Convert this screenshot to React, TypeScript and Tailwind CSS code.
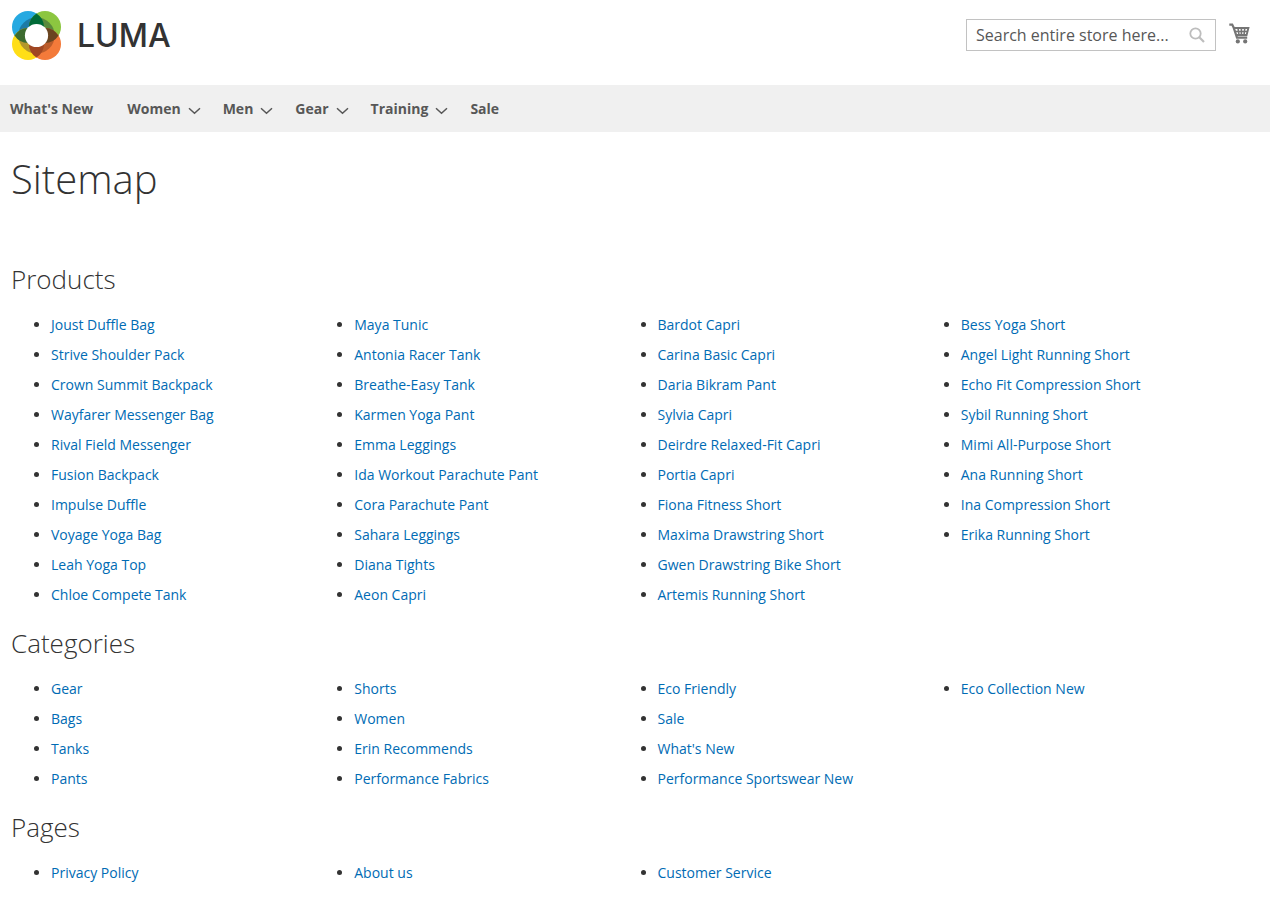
const menu = [
  { label: "What's New", hasChildren: false },
  { label: "Women", hasChildren: true },
  { label: "Men", hasChildren: true },
  { label: "Gear", hasChildren: true },
  { label: "Training", hasChildren: true },
  { label: "Sale", hasChildren: false },
];

const sections = [
  {
    title: "Products",
    links: [
      "Joust Duffle Bag",
      "Strive Shoulder Pack",
      "Crown Summit Backpack",
      "Wayfarer Messenger Bag",
      "Rival Field Messenger",
      "Fusion Backpack",
      "Impulse Duffle",
      "Voyage Yoga Bag",
      "Leah Yoga Top",
      "Chloe Compete Tank",
      "Maya Tunic",
      "Antonia Racer Tank",
      "Breathe-Easy Tank",
      "Karmen Yoga Pant",
      "Emma Leggings",
      "Ida Workout Parachute Pant",
      "Cora Parachute Pant",
      "Sahara Leggings",
      "Diana Tights",
      "Aeon Capri",
      "Bardot Capri",
      "Carina Basic Capri",
      "Daria Bikram Pant",
      "Sylvia Capri",
      "Deirdre Relaxed-Fit Capri",
      "Portia Capri",
      "Fiona Fitness Short",
      "Maxima Drawstring Short",
      "Gwen Drawstring Bike Short",
      "Artemis Running Short",
      "Bess Yoga Short",
      "Angel Light Running Short",
      "Echo Fit Compression Short",
      "Sybil Running Short",
      "Mimi All-Purpose Short",
      "Ana Running Short",
      "Ina Compression Short",
      "Erika Running Short",
    ],
  },
  {
    title: "Categories",
    links: [
      "Gear",
      "Bags",
      "Tanks",
      "Pants",
      "Shorts",
      "Women",
      "Erin Recommends",
      "Performance Fabrics",
      "Eco Friendly",
      "Sale",
      "What's New",
      "Performance Sportswear New",
      "Eco Collection New",
    ],
  },
  {
    title: "Pages",
    links: ["Privacy Policy", "About us", "Customer Service"],
  },
];

function Logo() {
  return (
    <a href="#" aria-label="Luma" className="flex items-center gap-4 pl-0.5">
      <svg viewBox="0 0 49 49" className="h-[49px] w-[49px]" aria-hidden="true">
        <defs>
          <clipPath id="ring">
            <circle cx="24.5" cy="24.5" r="18.2" />
          </clipPath>
        </defs>
        <circle cx="16" cy="16" r="16" fill="#26a9e1" />
        <circle cx="33" cy="16" r="16" fill="#8cc640" />
        <circle cx="16" cy="33" r="16" fill="#ffde17" />
        <circle cx="33" cy="33" r="16" fill="#f37a3a" />
        {/* darker tones where the centre ring crosses each circle */}
        <g clipPath="url(#ring)">
          <circle cx="16" cy="16" r="16" fill="#1d7ba6" />
          <circle cx="33" cy="16" r="16" fill="#5a8a3c" />
          <circle cx="16" cy="33" r="16" fill="#b3972c" />
          <circle cx="33" cy="33" r="16" fill="#bb5c2b" />
        </g>
        <path d="M2.45 24.5A16 16 0 0 1 29.55 24.5A16 16 0 0 1 2.45 24.5Z" fill="#3c6b30" />
        <path d="M19.45 24.5A16 16 0 0 1 46.55 24.5A16 16 0 0 1 19.45 24.5Z" fill="#6a4520" />
        <path d="M24.5 2.45A16 16 0 0 1 24.5 29.55A16 16 0 0 1 24.5 2.45Z" fill="#006b38" />
        <path d="M24.5 19.45A16 16 0 0 1 24.5 46.55A16 16 0 0 1 24.5 19.45Z" fill="#a04723" />
        <circle cx="24.5" cy="24.5" r="11.6" fill="#fff" />
      </svg>
      <span className="font-[Inter,sans-serif] text-[32px] leading-8 font-medium text-[#333]">LUMA</span>
    </a>
  );
}

function SearchIcon() {
  return (
    <svg viewBox="0 0 16 16" className="h-4 w-4" fill="none" stroke="#bdbdbd" aria-hidden="true">
      <circle cx="6.5" cy="6.5" r="5.2" strokeWidth="1.8" />
      <path d="M10.3 10.3 15 15" strokeWidth="2.2" />
    </svg>
  );
}

function CartIcon() {
  return (
    <svg viewBox="0 0 21 21" className="h-[21px] w-[21px]" fill="none" stroke="#757575" aria-hidden="true">
      <path d="M0.3 1.6H3.2L4.6 4.4L8 14.6H18.2" strokeWidth="2.2" />
      <path d="M4.6 5H19.4L17.6 12H7" strokeWidth="1.9" />
      <path d="M5.6 8.5H18.6M9 5 10 12M12.4 5V12M15.8 5 15 12" strokeWidth="1.6" />
      <circle cx="8.8" cy="18.4" r="2.1" fill="#757575" stroke="none" />
      <circle cx="16.2" cy="18.4" r="2.1" fill="#757575" stroke="none" />
    </svg>
  );
}

function Header() {
  return (
    <header className="flex h-[85px] items-start justify-between pr-5 pl-2.5">
      <div className="pt-[11px]">
        <Logo />
      </div>
      <div className="flex items-center gap-[13px] pt-[19px]">
        <form role="search" className="flex h-8 w-[250px] items-center border border-[#c2c2c2] bg-white pr-2.5 pl-[9px]">
          <input
            type="text"
            aria-label="Search"
            placeholder="Search entire store here..."
            className="min-w-0 flex-1 text-base leading-6 text-[#333] outline-none placeholder:text-[#575757]"
          />
          <button type="submit" aria-label="Search">
            <SearchIcon />
          </button>
        </form>
        <a href="#" aria-label="My Cart" className="pb-1">
          <CartIcon />
        </a>
      </div>
    </header>
  );
}

function Navigation() {
  return (
    <nav className="bg-[#f0f0f0] pr-5 pl-2.5">
      <ul className="flex gap-[22px]">
        {menu.map((item) => (
          <li key={item.label} className={item.hasChildren ? "" : "pr-3"}>
            <a href="#" className="flex h-[47px] items-center gap-[7px] text-sm font-bold text-[#575757]">
              {item.label}
              {item.hasChildren && (
                <svg viewBox="0 0 13 8" className="mt-1 h-2 w-[13px]" fill="none" stroke="#575757" aria-hidden="true">
                  <path d="M1 1.2 6.5 6.2 12 1.2" strokeWidth="1.5" />
                </svg>
              )}
            </a>
          </li>
        ))}
      </ul>
    </nav>
  );
}

export default function App() {
  return (
    <div className="bg-white font-['Open_Sans',sans-serif] text-sm text-[#333]">
      <Header />
      <Navigation />
      <main className="pt-[25px] pr-5 pb-5 pl-[11px]">
        <h1 className="mb-16 text-[40px] leading-11 font-light">Sitemap</h1>
        {sections.map((section) => (
          <section key={section.title} className="mb-[14px]">
            <h2 className="mb-[21px] text-[26px] leading-[29px] font-light">{section.title}</h2>
            <ul className="list-disc columns-4 gap-3.5 pl-10">
              {section.links.map((link) => (
                <li key={link} className="break-inside-avoid pb-2.5">
                  <a href="#" className="text-[#006bb4]">
                    {link}
                  </a>
                </li>
              ))}
            </ul>
          </section>
        ))}
      </main>
    </div>
  );
}
